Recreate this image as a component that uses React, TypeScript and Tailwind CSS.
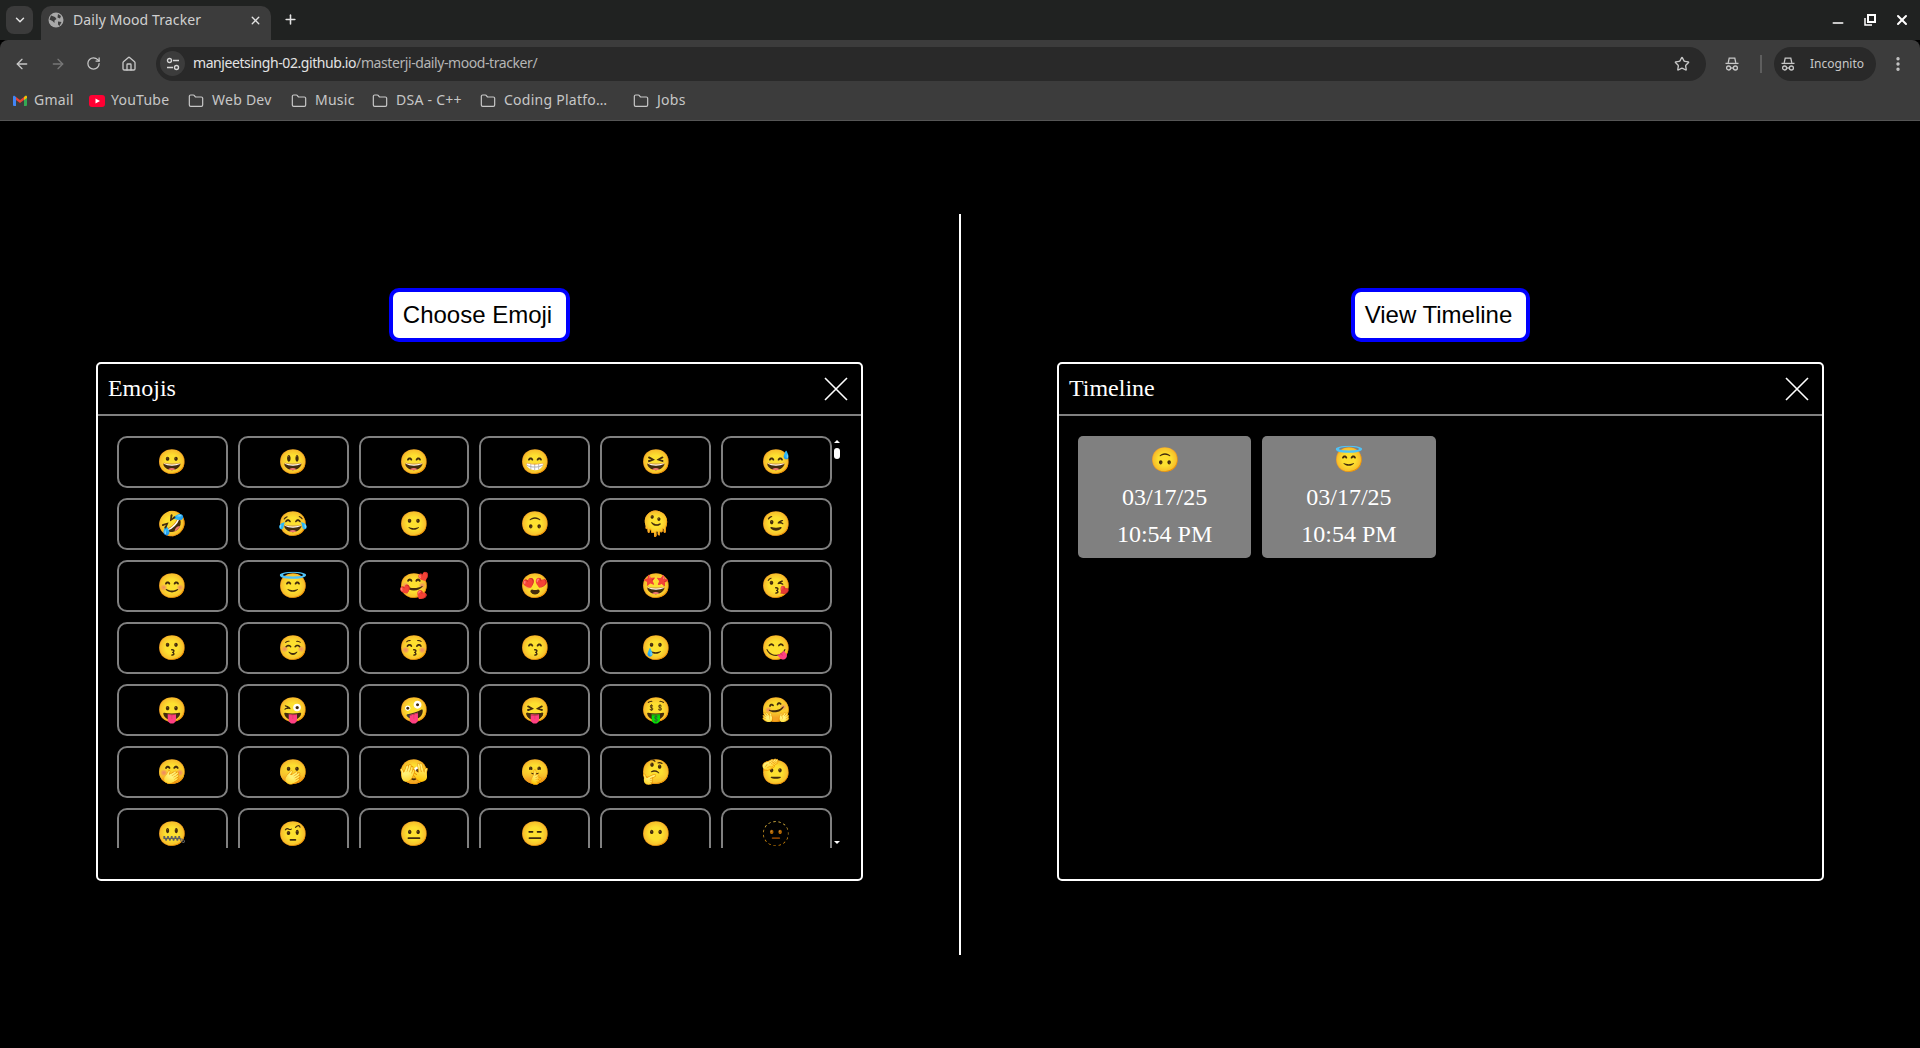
import { ArrowLeft, ArrowRight, RotateCw, Home, Star, X, Plus, ChevronDown, Minus, Folder, EllipsisVertical } from 'lucide-react'

const emojis = [
  '😀', '😃', '😄', '😁', '😆', '😅',
  '🤣', '😂', '🙂', '🙃', '🫠', '😉',
  '😊', '😇', '🥰', '😍', '🤩', '😘',
  '😗', '☺️', '😚', '😙', '🥲', '😋',
  '😛', '😜', '🤪', '😝', '🤑', '🤗',
  '🤭', '🫢', '🫣', '🤫', '🤔', '🫡',
  '🤐', '🤨', '😐', '😑', '😶', '🫥',
  '😏', '😒', '🙄', '😬', '🤥', '😌',
  '😔', '😪', '🤤', '😴', '😷', '🤒',
]

const bookmarks = [
  { label: 'Web Dev', w: 'w-[103px]' },
  { label: 'Music', w: 'w-[81px]' },
  { label: 'DSA - C++', w: 'w-[108px]' },
  { label: 'Coding Platfo…', w: 'w-[153px]' },
  { label: 'Jobs', w: 'w-[70px]' },
]

function IncognitoIcon() {
  return (
    <svg width="16" height="16" viewBox="0 0 16 16" fill="none" stroke="#c7c7c7" strokeWidth="1.3">
      <path d="M4.2 6.8 5.2 2.2h5.6l1 4.6" />
      <path d="M1.5 7.4h13" />
      <circle cx="4.6" cy="12" r="2" />
      <circle cx="11.4" cy="12" r="2" />
      <path d="M6.6 12h2.8" />
    </svg>
  )
}

function Panel({ title, children }: { title: string; children: React.ReactNode }) {
  return (
    <div className="w-[80%] h-[519px] border-2 border-white rounded-[5px] flex flex-col">
      <div className="h-[52px] shrink-0 border-b-2 border-[#808080] flex items-center justify-between pl-[10px] pr-[12px]">
        <span className="text-[24px] text-white -translate-y-[1px]">{title}</span>
        <svg width="26" height="26" viewBox="0 0 26 26" stroke="#fff" strokeWidth="1.6">
          <path d="M2 2 24 24M24 2 2 24" />
        </svg>
      </div>
      {children}
    </div>
  )
}

function MoodCard({ emoji }: { emoji: string }) {
  return (
    <div className="bg-[#808080] rounded-[5px] px-[39px] py-[10px] flex flex-col items-center gap-[10px] text-white text-[24px] leading-[27px]">
      <span className="h-[28px] leading-[28px]">{emoji}</span>
      <span>03/17/25</span>
      <span>10:54 PM</span>
    </div>
  )
}

export default function App() {
  return (
    <div className="h-screen flex flex-col bg-black overflow-hidden font-['Liberation_Serif',serif]">
      {/* browser chrome */}
      <div className="shrink-0 font-['Noto_Sans',sans-serif]">
        <div className="h-[40px] bg-[#202221] flex items-end">
          <div className="w-[27px] h-[28px] ml-[6px] mb-[6px] rounded-[8px] bg-[#3b3b3b] flex items-center justify-center">
            <ChevronDown size={14} color="#e3e3e3" strokeWidth={2.5} />
          </div>
          <div className="w-[230px] h-[34px] ml-[8px] rounded-t-[10px] bg-[#3c3c3c] flex items-center pl-[7px] pr-[9px] pb-[6px]">
            <svg width="16" height="16" viewBox="0 0 16 16">
              <circle cx="8" cy="8" r="7.5" fill="#a8a8a8" />
              <path d="M3 3.5 7 5l1.5 2-2 1.5L6.5 11 4.5 9 1.5 7.5ZM10 2l3 2-1 2.5-2.5-1ZM10 9.5l3.5.5-2 4-1.5-1.5Z" fill="#3c3c3c" />
            </svg>
            <span className="ml-[9px] text-[14px] tracking-[0.1px] text-[#d0d0d0] flex-1 whitespace-nowrap -translate-y-[1px]">Daily Mood Tracker</span>
            <X size={13} color="#e3e3e3" strokeWidth={2.5} />
          </div>
          <div className="ml-[12px] mb-[13px]">
            <Plus size={15} color="#e3e3e3" strokeWidth={2.5} />
          </div>
          <div className="flex-1" />
          <div className="flex items-center gap-[16px] mb-[12px] pr-[10px]">
            <Minus size={16} color="#fff" strokeWidth={2.5} className="translate-y-[3px]" />
            <svg width="16" height="16" viewBox="0 0 16 16" fill="none" stroke="#fff" strokeWidth="2">
              <path d="M6 3h7v7H6z" />
              <path d="M3 6v7h7" strokeWidth="1.5" />
            </svg>
            <X size={16} color="#fff" strokeWidth={3} />
          </div>
        </div>
        <div className="bg-[#3c3c3c] rounded-tr-[8px] rounded-tl-[8px]">
          <div className="h-[41px] flex items-center pt-[6px]">
            <div className="w-[156px] flex items-center shrink-0 pl-[14px] gap-[20px]">
              <ArrowLeft size={16} color="#c7c7c7" strokeWidth={2} />
              <ArrowRight size={16} color="#777" strokeWidth={2} />
              <RotateCw size={15} color="#c7c7c7" strokeWidth={2} />
              <Home size={16} color="#c7c7c7" strokeWidth={2} />
            </div>
            <div className="w-[1550px] h-[34px] rounded-full bg-[#292929] flex items-center pl-[4px] pr-[16px]">
              <div className="w-[25px] h-[25px] rounded-full bg-[#3c3c3c] flex items-center justify-center">
                <svg width="14" height="14" viewBox="0 0 14 14" fill="none" stroke="#d5d5d5" strokeWidth="1.4">
                  <circle cx="3.5" cy="3.5" r="2" />
                  <path d="M7 3.5h6M1 10.5h6" />
                  <circle cx="10.5" cy="10.5" r="2" />
                </svg>
              </div>
              <span className="ml-[8px] text-[14px] tracking-[-0.42px] text-[#e3e3e3] flex-1 whitespace-nowrap -translate-y-[1px]">
                manjeetsingh-02.github.io<span className="text-[#b5b5b5]">/masterji-daily-mood-tracker/</span>
              </span>
              <Star size={16} color="#c7c7c7" strokeWidth={2} />
            </div>
            <div className="ml-[18px]">
              <IncognitoIcon />
            </div>
            <div className="w-[2px] h-[18px] bg-[#5e5e5e] ml-[20px]" />
            <div className="w-[102px] h-[34px] ml-[12px] rounded-full bg-[#292929] flex items-center pl-[6px] gap-[14px]">
              <IncognitoIcon />
              <span className="text-[12px] text-[#c7c7c7]">Incognito</span>
            </div>
            <EllipsisVertical size={18} color="#c7c7c7" strokeWidth={2.5} className="ml-[13px]" />
          </div>
          <div className="h-[39px] flex items-center pl-[13px] text-[14px] tracking-[0.25px] text-[#c7c7c7] whitespace-nowrap">
            <div className="w-[76px] flex items-center gap-[7px]">
              <svg width="14" height="11" viewBox="0 0 14 11">
                <path d="M0 1.5 1 .5l2 1.5V11H1a1 1 0 0 1-1-1Z" fill="#4285f4" />
                <path d="M14 1.5 13 .5l-2 1.5V11h2a1 1 0 0 0 1-1Z" fill="#34a853" />
                <path d="M3 2 7 5l4-3v3L7 8 3 5Z" fill="#ea4335" />
                <path d="M11 2l2-1.5 1 1V3l-3 2Z" fill="#fbbc04" />
              </svg>
              <span className="-translate-y-[1px]">Gmail</span>
            </div>
            <div className="w-[99px] flex items-center gap-[6px]">
              <svg width="16" height="12" viewBox="0 0 16 12">
                <rect width="16" height="12" rx="3" fill="#ff0033" />
                <path d="M6.5 3.5 11 6l-4.5 2.5Z" fill="#fff" />
              </svg>
              <span className="-translate-y-[1px]">YouTube</span>
            </div>
            {bookmarks.map(b => (
              <div key={b.label} className={`${b.w} flex items-center gap-[8px]`}>
                <Folder size={16} color="#c7c7c7" strokeWidth={1.8} />
                <span className="-translate-y-[1px]">{b.label}</span>
              </div>
            ))}
          </div>
        </div>
        <div className="h-[1px] bg-[#555]" />
      </div>

      {/* page */}
      <div className="flex-1 min-h-0 flex items-center">
        <div className="w-[959px] flex flex-col items-center gap-[20px]">
          <button className="h-[54px] pl-[10px] pr-[14px] bg-white border-4 border-[#0000ff] rounded-[10px] text-[24px] text-black font-['Liberation_Sans',sans-serif]">
            Choose Emoji
          </button>
          <Panel title="Emojis">
            <div className="mt-[20px] mx-[19px] h-[412px] flex">
              <div className="w-[715px] shrink-0 overflow-y-scroll [scrollbar-width:none]">
                <div className="grid grid-cols-6 gap-[10px]">
                  {emojis.map((e, i) => (
                    <button key={i} className="h-[52px] border-2 border-[#808080] rounded-[10px] text-[24px] leading-none flex items-center justify-center">
                      {e}
                    </button>
                  ))}
                </div>
              </div>
              {/* thin scrollbar, headless chrome does not paint the native one */}
              <div className="w-[10px] flex flex-col items-center pt-[4px] pb-[4px]">
                <div className="w-0 h-0 border-x-[3px] border-x-transparent border-b-[3px] border-b-white" />
                <div className="w-[6px] h-[11px] mt-[5px] rounded-full bg-white" />
                <div className="flex-1" />
                <div className="w-0 h-0 border-x-[3px] border-x-transparent border-t-[3px] border-t-white" />
              </div>
            </div>
          </Panel>
        </div>
        <div className="w-[2px] h-[80%] bg-white shrink-0" />
        <div className="w-[959px] flex flex-col items-center gap-[20px]">
          <button className="h-[54px] pl-[10px] pr-[14px] bg-white border-4 border-[#0000ff] rounded-[10px] text-[24px] text-black font-['Liberation_Sans',sans-serif]">
            View Timeline
          </button>
          <Panel title="Timeline">
            <div className="pt-[20px] px-[19px] flex gap-[11px]">
              <MoodCard emoji="🙃" />
              <MoodCard emoji="😇" />
            </div>
          </Panel>
        </div>
      </div>
    </div>
  )
}
